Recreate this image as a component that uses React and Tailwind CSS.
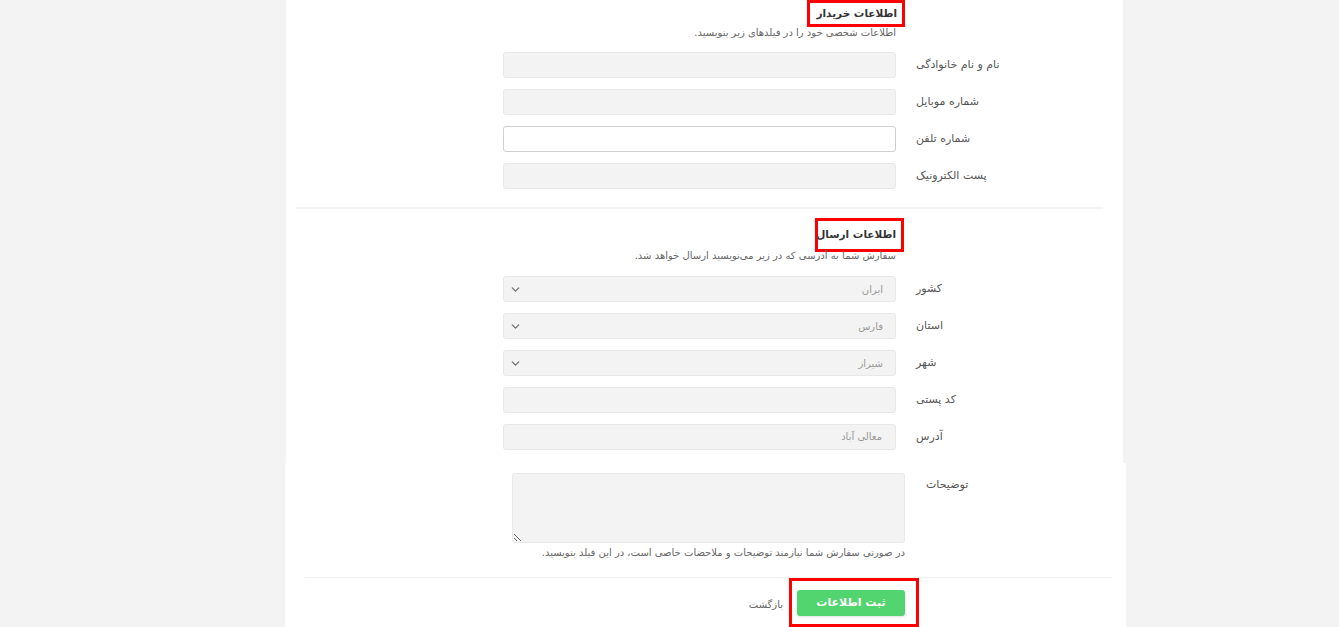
import React from "react";
import { ChevronDown } from "lucide-react";

const font = { fontFamily: '"DejaVu Sans", Tahoma, sans-serif' };

function Row({ label, children }) {
  return (
    <div className="flex items-center h-[26px] ml-[217px]">
      <div className="w-[393px] h-full">{children}</div>
      <div dir="rtl" className="ml-[20px] text-[11px] text-[#555] text-left whitespace-nowrap">
        {label}
      </div>
    </div>
  );
}

function TextInput({ white, value }) {
  return (
    <div
      dir="rtl"
      className={
        "w-full h-full rounded-[3px] border " +
        (white ? "bg-white border-[#cfcfcf]" : "bg-[#f3f3f3] border-[#e8e8e8]")
      }
    >
      {value && (
        <span className="block pr-[13px] leading-[24px] text-[10px] text-[#999]">{value}</span>
      )}
    </div>
  );
}

function SelectBox({ value }) {
  return (
    <div className="w-full h-full rounded-[3px] border border-[#e8e8e8] bg-[#f3f3f3] flex items-center justify-between pl-[5px] pr-[12px]">
      <ChevronDown size={13} strokeWidth={2.4} color="#6f6f6f" />
      <span dir="rtl" className="text-[10px] text-[#999]">{value}</span>
    </div>
  );
}

export default function App() {
  return (
    <div style={font} className="w-[1339px] h-[627px] bg-[#f3f3f3] overflow-hidden">
      {/* top panel */}
      <div className="ml-[286px] w-[837px] h-[463px] bg-white flex flex-col">
        <div className="flex justify-end mr-[218px]">
          <div className="w-[98px] h-[27px] border-[3px] border-[#ff0000] flex items-center justify-end pr-[5px]">
            <span dir="rtl" className="text-[10.5px] font-bold text-[#333] whitespace-nowrap">اطلاعات خریدار</span>
          </div>
        </div>
        <div dir="rtl" className="mr-[227px] text-[10px] leading-[14px] text-[#666] -mt-px">
          اطلاعات شخصی خود را در فیلدهای زیر بنویسید.
        </div>
        <div className="flex flex-col gap-[11px] mt-[12px]">
          <Row label="نام و نام خانوادگی"><TextInput /></Row>
          <Row label="شماره موبایل"><TextInput /></Row>
          <Row label="شماره تلفن"><TextInput white /></Row>
          <Row label="پست الکترونیک"><TextInput /></Row>
        </div>
        <div className="ml-[10px] w-[807px] h-[2px] bg-[#f2f2f2] mt-[18px]" />
        <div className="flex justify-end mr-[219px] mt-[9px]">
          <div className="w-[89px] h-[34px] border-[3px] border-[#ff0000] flex items-center justify-end pr-[5px]">
            <span dir="rtl" className="text-[10.5px] font-bold text-[#333] whitespace-nowrap">اطلاعات ارسال</span>
          </div>
        </div>
        <div dir="rtl" className="mr-[227px] text-[10px] leading-[14px] text-[#666] -mt-[3px]">
          سفارش شما به آدرسی که در زیر می‌نویسید ارسال خواهد شد.
        </div>
        <div className="flex flex-col gap-[11px] mt-[13px]">
          <Row label="کشور"><SelectBox value="ایران" /></Row>
          <Row label="استان"><SelectBox value="فارس" /></Row>
          <Row label="شهر"><SelectBox value="شیراز" /></Row>
          <Row label="کد پستی"><TextInput /></Row>
          <Row label="آدرس"><TextInput value="معالی آباد" /></Row>
        </div>
      </div>

      {/* bottom panel */}
      <div className="ml-[285px] w-[841px] h-[164px] bg-white flex flex-col">
        <div className="flex ml-[227px] mt-[10px]">
          <textarea
            dir="rtl"
            className="w-[393px] h-[70px] rounded-[3px] border border-[#e8e8e8] bg-[#f3f3f3] outline-none"
          />
          <div dir="rtl" className="ml-[21px] mt-[4px] text-[11px] text-[#555]">توضیحات</div>
        </div>
        <div className="flex justify-end mr-[221px] mt-[3px]">
          <div dir="rtl" className="text-[10px] leading-[14px] text-[#666]">
            در صورتی سفارش شما نیازمند توضیحات و ملاحضات خاصی است، در این فیلد بنویسید.
          </div>
        </div>
        <div className="ml-[20px] w-[807px] h-[2px] bg-[#f2f2f2] mt-[17px]" />
        <div className="flex items-center justify-end mr-[207px]">
          <span dir="rtl" className="text-[10px] text-[#666] whitespace-nowrap mr-[6px] mt-[4px]">بازگشت</span>
          <div className="w-[130px] h-[49px] border-[3px] border-[#ff0000] flex items-center justify-start pl-[5px] pt-[1px]">
            <button className="w-[108px] h-[26px] rounded-[3px] bg-[#52d46f] text-white text-[11px] font-bold shadow-sm">
              <span dir="rtl">ثبت اطلاعات</span>
            </button>
          </div>
        </div>
      </div>
    </div>
  );
}
